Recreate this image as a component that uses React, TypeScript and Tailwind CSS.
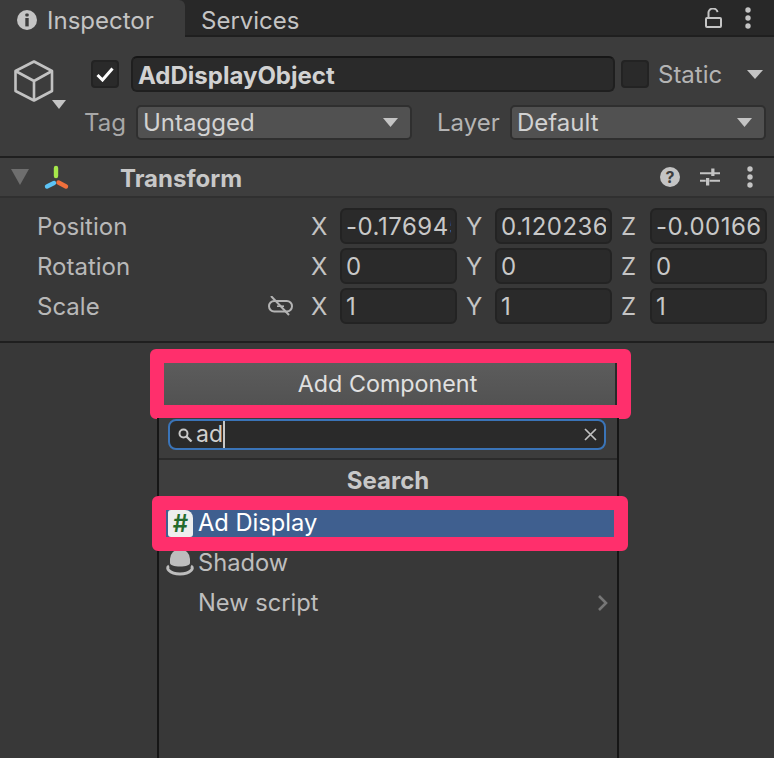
const rows = [
    { label: "Position", x: "-0.176945", y: "0.120236", z: "-0.00166", link: false },
    { label: "Rotation", x: "0", y: "0", z: "0", link: false },
    { label: "Scale", x: "1", y: "1", z: "1", link: true },
];

function Caret({ className }: { className: string }) {
    return (
        <svg className={className} viewBox="0 0 16 9" preserveAspectRatio="none">
            <path d="M0 0h16L8 9z" fill="currentColor" />
        </svg>
    );
}

function Dropdown({ value, className }: { value: string; className: string }) {
    return (
        <div className={`flex h-[35px] items-center justify-between rounded-[5px] border-2 border-[#2f2f2f] bg-[#515151] pl-[5px] pr-[12px] text-[24px] text-[#d2d2d2] ${className}`}>
            <span className="leading-none">{value}</span>
            <Caret className="h-[9px] w-[15px] text-[#c4c4c4]" />
        </div>
    );
}

function AxisField({ axis, value }: { axis: string; value: string }) {
    return (
        <div className="flex items-center">
            <span className="w-[29px] pt-[2px] text-[24px] leading-none text-[#c4c4c4]">{axis}</span>
            <div className="flex h-[36px] w-[117px] items-center overflow-hidden rounded-[6px] border-2 border-[#232323] bg-[#2a2a2a] pt-[2px] pr-[4px] pl-[4px] text-[24px] tracking-[0.5px] whitespace-nowrap text-[#c8c8c8]">
                <span className="block overflow-hidden">{value}</span>
            </div>
        </div>
    );
}

export default function App() {
    return (
        <div className="relative h-[758px] w-[774px] overflow-hidden bg-[#383838] font-['Inter',sans-serif]">

            {/* Tabs */}
            <div className="flex h-[37px] items-start border-b-2 border-[#1f1f1f] bg-[#282828]">
                <div className="-mb-[2px] flex h-[37px] w-[185px] items-center rounded-tr-[6px] bg-[#3c3c3c] pt-[3px] pl-[17px]">
                    <svg className="h-[20px] w-[20px] text-[#c4c4c4]" viewBox="0 0 20 20">
                        <circle cx="10" cy="10" r="10" fill="currentColor" />
                        <rect x="8.3" y="3.4" width="3.4" height="3.2" rx="1" fill="#3c3c3c" />
                        <rect x="8.3" y="8" width="3.4" height="8.4" fill="#3c3c3c" />
                    </svg>
                    <span className="ml-[10px] pt-[2px] text-[24px] leading-none text-[#c4c4c4]">Inspector</span>
                </div>
                <div className="flex h-[35px] items-center pt-[7px] pl-[16px] text-[24px] leading-none text-[#c4c4c4]">Services</div>
                <div className="ml-auto flex h-[35px] items-center pr-[23px]">
                    <svg className="h-[20px] w-[17px] text-[#c4c4c4]" viewBox="0 0 17 20" fill="none" stroke="currentColor" strokeWidth="2">
                        <rect x="1" y="10" width="15" height="9" rx="1" />
                        <path d="M3.5 10V5a4.5 4 0 0 1 9-.8" />
                    </svg>
                    <svg className="ml-[23px] h-[22px] w-[6px] text-[#c4c4c4]" viewBox="0 0 6 22" fill="currentColor">
                        <circle cx="3" cy="3" r="2.7" />
                        <circle cx="3" cy="11" r="2.7" />
                        <circle cx="3" cy="19" r="2.7" />
                    </svg>
                </div>
            </div>

            {/* Object header */}
            <div className="h-[121px] border-b-2 border-[#1f1f1f] bg-[#3c3c3c] pt-[19px]">
                <div className="flex h-[36px] items-center">
                    <div className="relative ml-[14px] h-[36px] w-[77px]">
                        <svg className="absolute top-[4px] left-0 h-[42px] w-[40px] text-[#c2c2c2]" viewBox="0 0 40 42" fill="none" stroke="currentColor" strokeWidth="2.6" strokeLinejoin="round">
                            <path d="M20 1.5 38 11v20L20 40.5 1.5 31V11z" />
                            <path d="M1.5 11 20 21l18-10M20 21v19.5" />
                        </svg>
                        <Caret className="absolute top-[44px] left-[38px] h-[9px] w-[14px] text-[#c4c4c4]" />
                    </div>
                    <div className="flex h-[28px] w-[28px] items-center justify-center rounded-[4px] border-2 border-[#232323] bg-[#2a2a2a]">
                        <svg className="h-[15px] w-[18px] text-white" viewBox="0 0 18 15" fill="none" stroke="currentColor" strokeWidth="3">
                            <path d="M1.5 8 6.5 13 16.5 1.5" />
                        </svg>
                    </div>
                    <div className="ml-[12px] flex h-[36px] w-[484px] items-center rounded-[6px] border-2 border-[#1f1f1f] border-t-[#161616] bg-[#2a2a2a] pt-[3px] pl-[5px] text-[24px] leading-none font-bold text-[#d2d2d2]">
                        AdDisplayObject
                    </div>
                    <div className="ml-[6px] h-[28px] w-[28px] rounded-[4px] border-2 border-[#232323] bg-[#2a2a2a]" />
                    <span className="ml-[9px] pt-[2px] text-[24px] leading-none text-[#b4b4b4]">Static</span>
                    <Caret className="ml-[25px] h-[9px] w-[16px] text-[#c4c4c4]" />
                </div>
                <div className="mt-[13px] flex items-center">
                    <span className="ml-[84px] w-[52px] text-[24px] leading-none text-[#a8a8a8]">Tag</span>
                    <Dropdown value="Untagged" className="w-[276px]" />
                    <span className="ml-[25px] w-[73px] text-[24px] leading-none text-[#b4b4b4]">Layer</span>
                    <Dropdown value="Default" className="w-[256px]" />
                </div>
            </div>

            {/* Transform header */}
            <div className="flex h-[40px] items-center border-b-2 border-[#303030] bg-[#3e3e3e]">
                <Caret className="ml-[11px] h-[16px] w-[18px] text-[#6e6e6e]" />
                <svg className="ml-[14px] h-[25px] w-[26px]" viewBox="0 0 26 25" fill="none" strokeWidth="4.4" strokeLinecap="round">
                    <path d="M13 3v8" stroke="#a6e84b" />
                    <path d="M4 21.5 11 18" stroke="#5cc3f5" />
                    <path d="M15.5 17.5 23 21.5" stroke="#f0703c" />
                </svg>
                <span className="ml-[51px] pt-[3px] text-[24px] leading-none font-bold text-[#c8c8c8]">Transform</span>
                <div className="ml-auto flex items-center pr-[21px]">
                    <div className="flex h-[20px] w-[20px] items-center justify-center rounded-full bg-[#c4c4c4] text-[16px] leading-none font-bold text-[#3e3e3e]">?</div>
                    <svg className="ml-[20px] h-[20px] w-[20px] text-[#c4c4c4]" viewBox="0 0 21 20" fill="none" stroke="currentColor" strokeWidth="2">
                        <path d="M0 6h21M0 14h6M10 14h11" />
                        <path d="M13.5 1v8M8 11v8" strokeWidth="3.4" />
                    </svg>
                    <svg className="ml-[27px] h-[22px] w-[6px] text-[#c4c4c4]" viewBox="0 0 6 22" fill="currentColor">
                        <circle cx="3" cy="3" r="2.7" />
                        <circle cx="3" cy="11" r="2.7" />
                        <circle cx="3" cy="19" r="2.7" />
                    </svg>
                </div>
            </div>

            {/* Transform fields */}
            <div className="flex h-[145px] flex-col gap-[4px] border-b-2 border-[#1f1f1f] pt-[10px] pr-[7px] pl-[37px]">
                {rows.map((row) => (
                    <div key={row.label} className="flex h-[36px] items-center">
                        <span className="flex-1 pt-[2px] text-[24px] leading-none text-[#b8b8b8]">{row.label}</span>
                        {row.link && (
                            <svg className="mr-[18px] h-[20px] w-[25px] text-[#b4b4b4]" viewBox="0 0 25 20" fill="none" stroke="currentColor" strokeWidth="2">
                                <rect x="1" y="5" width="23" height="10.5" rx="5.2" />
                                <path d="M3 0 21 19" />
                                <path d="M9 10.2h7" strokeWidth="1.6" />
                            </svg>
                        )}
                        <div className="flex gap-[9px]">
                            <AxisField axis="X" value={row.x} />
                            <AxisField axis="Y" value={row.y} />
                            <AxisField axis="Z" value={row.z} />
                        </div>
                    </div>
                ))}
            </div>

            {/* Add Component button */}
            <div className="absolute top-[349px] left-[150px] h-[70px] w-[481px] rounded-[6px] border-[14px] border-[#ff2f6c]">
                <div className="flex h-full items-center justify-center border-r-2 border-[#2a2a2a] bg-gradient-to-b from-[#5c5c5c] to-[#525252] pr-[4px] text-[23.3px] text-[#e0e0e0]">
                    Add Component
                </div>
            </div>

            {/* Search dropdown */}
            <div className="absolute top-[418px] left-[157px] h-[340px] w-[462px] border-x-2 border-[#161616] bg-[#383838]">
                <div className="flex h-[42px] items-start border-b-2 border-[#2b2b2b] bg-[#3c3c3c] pr-[11px] pl-[9px]">
                    <div className="mt-[1px] flex h-[31px] w-full items-center rounded-[8px] border-2 border-[#3a74b8] bg-[#2a2a2a] pl-[8px] pr-[7px]">
                        <svg className="h-[14px] w-[15px] text-[#c8c8c8]" viewBox="0 0 15 14" fill="none" stroke="currentColor" strokeWidth="2">
                            <circle cx="5.5" cy="5.5" r="4" />
                            <path d="m8.5 8.5 5 5" strokeWidth="2.4" />
                        </svg>
                        <span className="ml-[3px] text-[23px] leading-none text-[#d0d0d0]">ad</span>
                        <span className="h-[27px] w-[1.5px] bg-[#c8c8c8]" />
                        <svg className="ml-auto h-[13px] w-[13px] text-[#c0c0c0]" viewBox="0 0 13 13" stroke="currentColor" strokeWidth="1.7">
                            <path d="m1 1 11 11M12 1 1 12" />
                        </svg>
                    </div>
                </div>
                <div className="flex h-[37px] items-center justify-center bg-[#3e3e3e] pt-[4px] text-[24px] leading-none font-bold text-[#c8c8c8]">Search</div>
                <div className="h-[13px]" />
                <div className="flex h-[27px] items-center bg-[#3f5f8f] pl-[9px] text-[23.7px] text-white">
                    <div className="flex h-[27px] w-[25px] items-center justify-center rounded-[3px] rounded-tr-[8px] bg-[#eeeeee] text-[24px] leading-none font-semibold text-[#256b2d]">#</div>
                    <span className="ml-[5px] pb-[1px] leading-none">Ad Display</span>
                </div>
                <div className="flex h-[40px] items-center pt-[11px] pl-[7px] text-[23.7px] text-[#bebebe]">
                    <svg className="h-[27px] w-[28px]" viewBox="0 0 28 27">
                        <path d="M4 10a10 10 0 0 1 20 0v4c0 2-4 3.5-10 3.5S4 16 4 14z" fill="#bdbdbd" />
                        <path d="M3 17c-2 1-1.5 3 0 4.5 2.5 2.5 6.500 3.500 11 3.500s8.500-1 11-3.500c1.500-1.500 2-3.500 0-4.500" fill="none" stroke="#bdbdbd" strokeWidth="3" />
                    </svg>
                    <span className="ml-[4px] leading-none">Shadow</span>
                </div>
                <div className="mt-[12px] flex h-[28px] items-center pr-[8px] pl-[39px] text-[23.7px] text-[#bebebe]">
                    <span className="leading-none">New script</span>
                    <svg className="ml-auto h-[16px] w-[12px] text-[#767676]" viewBox="0 0 12 16" fill="none" stroke="currentColor" strokeWidth="2.6">
                        <path d="m2 1 7 7-7 7" />
                    </svg>
                </div>
            </div>

            {/* Highlight round Ad Display */}
            <div className="absolute top-[496px] left-[152px] h-[55px] w-[476px] rounded-[6px] border-[14px] border-[#ff2f6c]" />
        </div>
    );
}
